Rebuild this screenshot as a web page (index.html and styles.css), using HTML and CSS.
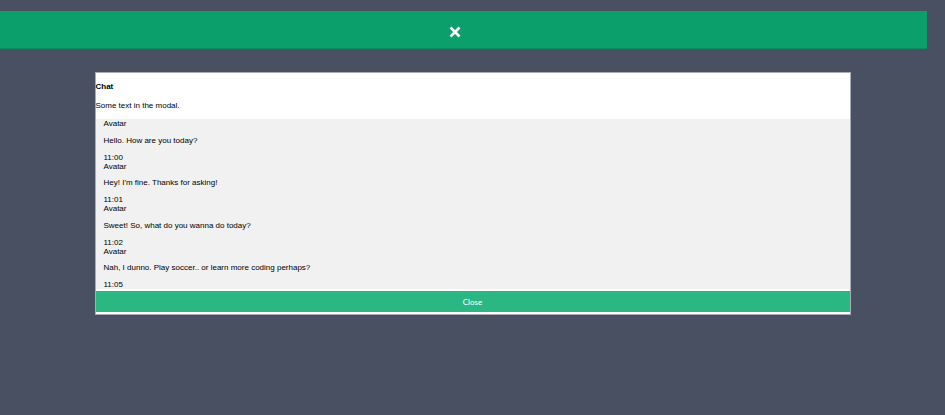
FILE: index.html
```html
<!DOCTYPE html>
<html lang="en">
<head>
<meta charset="utf-8">
<title>Chat modal</title>
<link rel="stylesheet" href="styles.css">
</head>
<body>
  <div class="topbar">
    <svg class="topbar-close" width="12" height="12" viewBox="0 0 12 12" aria-label="close">
      <path d="M1.5 1.5 L10.5 10.5 M10.5 1.5 L1.5 10.5" stroke="#fff" stroke-width="2.6" stroke-linecap="butt" fill="none"/>
    </svg>
  </div>
  <div class="modal">
    <div class="modal-header">
      <h4 class="modal-title">Chat</h4>
      <p class="modal-text">Some text in the modal.</p>
    </div>
    <div class="chat">
      <div class="msg">
        <div class="msg-avatar">Avatar</div>
        <p class="msg-text">Hello. How are you today?</p>
        <div class="msg-time">11:00</div>
      </div>
      <div class="msg">
        <div class="msg-avatar">Avatar</div>
        <p class="msg-text">Hey! I'm fine. Thanks for asking!</p>
        <div class="msg-time">11:01</div>
      </div>
      <div class="msg">
        <div class="msg-avatar">Avatar</div>
        <p class="msg-text">Sweet! So, what do you wanna do today?</p>
        <div class="msg-time">11:02</div>
      </div>
      <div class="msg">
        <div class="msg-avatar">Avatar</div>
        <p class="msg-text">Nah, I dunno. Play soccer.. or learn more coding perhaps?</p>
        <div class="msg-time">11:05</div>
      </div>
    </div>
    <button class="close-btn" type="button">Close</button>
  </div>
</body>
</html>
```
FILE: styles.css
```css
html, body {
  margin: 0;
  padding: 0;
}
body {
  background: #485061;
  font-family: "Liberation Sans", Arial, sans-serif;
  font-size: 8px;
  line-height: 9px;
  color: #000;
  padding-top: 11px;
  height: 415px;
  box-sizing: border-box;
}
.topbar {
  width: 927px;
  height: 38px;
  background: #0ba06b;
  border-bottom: 1px solid #0a8f60;
  box-sizing: border-box;
  display: flex;
  align-items: center;
  justify-content: center;
  padding-right: 17px;
  padding-top: 4px;
}
.topbar-close {
  display: block;
}
.modal {
  width: 756px;
  margin: 23px auto 0;
  box-sizing: border-box;
  background: #fff;
  border: 1px solid #a9acb3;
  display: flex;
  flex-direction: column;
  padding-bottom: 2px;
}
.modal-header {
  padding-top: 9px;
}
.modal-title {
  margin: 0 0 10px;
  font-size: 8px;
  line-height: 9px;
  font-weight: bold;
}
.modal-text {
  margin: 0 0 9px;
}
.chat {
  background: #f1f1f1;
  padding: 0 8px;
  height: 170px;
  overflow: hidden;
  margin-bottom: 2px;
}
.msg-text {
  margin: 7.75px 0;
}
.close-btn {
  display: block;
  width: 100%;
  height: 21px;
  border: none;
  background: #2bb784;
  color: #fff;
  font-family: Lato, "Open Sans", sans-serif;
  font-size: 8px;
  padding: 0;
  margin: 0;
}
```
